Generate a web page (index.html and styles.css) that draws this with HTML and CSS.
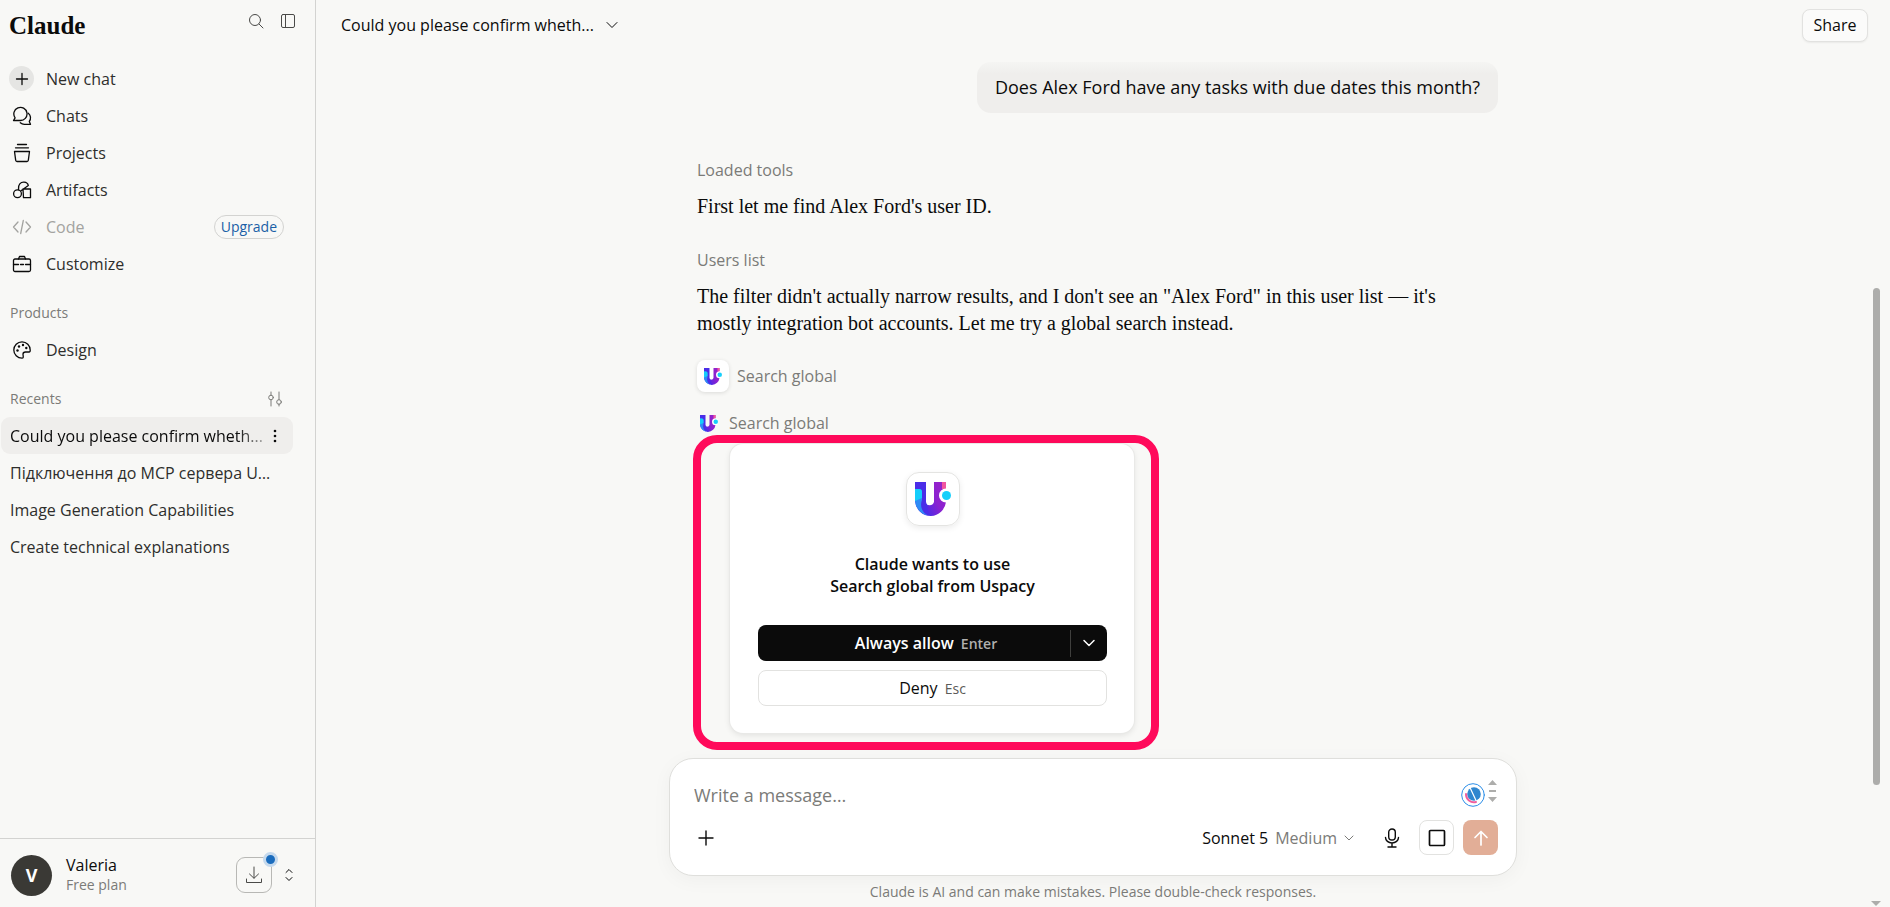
FILE: index.html
```html
<!DOCTYPE html>
<html lang="en">
<head>
    <meta charset="UTF-8">
    <meta name="viewport" content="width=device-width, initial-scale=1.0">
    <title>Claude</title>
    <link rel="stylesheet" href="styles.css">
</head>
<body>
    <!-- Shared logo -->
    <svg width="0" height="0" class="defs" aria-hidden="true">
        <defs>
            <linearGradient id="u-right" x1="0" y1="1" x2="1" y2="0">
                <stop offset="0" stop-color="#4a2be8"/>
                <stop offset="0.45" stop-color="#8a22d0"/>
                <stop offset="1" stop-color="#9a22c8"/>
            </linearGradient>
            <symbol id="uspacy" viewBox="0 0 36 34">
                <path d="M0 0h11v20a5 5 0 0 0 5 4v10A16 16 0 0 1 0 19z" fill="#4a2de8"/>
                <path d="M0 7h4a3 3 0 0 1 3 3v8a12 12 0 0 0 6 15.500A16 16 0 0 1 0 19z" fill="#2e8cf5"/>
                <path d="M0 7h4a3 3 0 0 1 3 3v6l-7 3z" fill="#14cdfb"/>
                <path d="M19 0h12v20A16 16 0 0 1 16 34a12 12 0 0 1 -3 -11a5 5 0 0 0 6 -3z" fill="url(#u-right)"/>
                <path d="M27 0h4v7h-4z" fill="#f0559f"/>
                <circle cx="31" cy="13.500" r="7" fill="#fff"/>
                <circle cx="31.500" cy="13.500" r="4.500" fill="#17cffb"/>
            </symbol>
        </defs>
    </svg>

    <div class="app">
        <!-- Sidebar -->
        <aside class="sidebar">
            <div class="sidebar-top">
                <a href="#" class="brand">Claude</a>
                <div class="top-actions">
                    <button class="icon-btn" aria-label="Search">
                        <svg width="16" height="16" viewBox="0 0 16 16"><circle cx="7" cy="7" r="5.500"/><path d="M11 11l4 4"/></svg>
                    </button>
                    <button class="icon-btn" aria-label="Toggle sidebar">
                        <svg width="16" height="16" viewBox="0 0 16 16"><rect x="1.500" y="1.500" width="13" height="13" rx="1.500"/><path d="M5.500 1.500v13"/></svg>
                    </button>
                </div>
            </div>

            <nav class="menu">
                <a href="#" class="menu-item">
                    <span class="menu-icon plus"><svg width="14" height="14" viewBox="0 0 14 14"><path d="M7 1.500v11M1.500 7h11"/></svg></span>
                    New chat
                </a>
                <a href="#" class="menu-item">
                    <span class="menu-icon"><svg width="20" height="20" viewBox="0 0 20 20"><path d="M1.500 14.500l1.600-2.700A6.600 6.600 0 1 1 8 14.500z"/><path d="M16.300 7.200a6 6 0 0 1 1 8.300l1.200 2.800h-5.500a6 6 0 0 1-4.700-1.600"/></svg></span>
                    Chats
                </a>
                <a href="#" class="menu-item">
                    <span class="menu-icon"><svg width="20" height="20" viewBox="0 0 20 20"><path d="M5.500 1.500h9M3.500 4.800h13M2.500 8.500h15l-1.200 8.800a1.300 1.300 0 0 1-1.300 1.200h-10a1.300 1.300 0 0 1-1.300-1.200z"/></svg></span>
                    Projects
                </a>
                <a href="#" class="menu-item">
                    <span class="menu-icon"><svg width="20" height="20" viewBox="0 0 20 20"><circle cx="5.500" cy="13.800" r="3.900"/><path d="M11 9h7.500v8.700h-7zM6.500 9.500C5.800 4.500 8.800 2 12 2.200c2.500.2 4 1.600 4.300 3.300L9 10.700"/></svg></span>
                    Artifacts
                </a>
                <a href="#" class="menu-item disabled">
                    <span class="menu-icon"><svg width="20" height="20" viewBox="0 0 20 20"><path d="M6 5l-4.500 5L6 15M14 5l4.500 5-4.500 5M11.300 3.500l-2.600 13"/></svg></span>
                    Code
                    <span class="badge">Upgrade</span>
                </a>
                <a href="#" class="menu-item">
                    <span class="menu-icon"><svg width="20" height="20" viewBox="0 0 20 20"><rect x="1.500" y="5" width="17" height="12.500" rx="1.500"/><path d="M6.500 5l1-2.500h5l1 2.500M1.500 10.500h5M8.500 10.500h3M13.500 10.500h5"/></svg></span>
                    Customize
                </a>
            </nav>

            <h2 class="section-title">Products</h2>
            <nav class="menu">
                <a href="#" class="menu-item">
                    <span class="menu-icon"><svg width="20" height="20" viewBox="0 0 20 20"><path d="M10 1.800a8.200 8.200 0 0 0 0 16.400c2 0 1-2.600 1-4s1-2.200 2.500-2.200H17c1 0 1.300-1 1.200-2A8.200 8.200 0 0 0 10 1.800z"/><g class="dots"><circle cx="5.500" cy="10.500" r="1.200"/><circle cx="7" cy="6.500" r="1.200"/><circle cx="11" cy="5" r="1.200"/><circle cx="14.300" cy="8" r="1.200"/></g></svg></span>
                    Design
                </a>
            </nav>

            <div class="section-row">
                <h2 class="section-title">Recents</h2>
                <button class="icon-btn" aria-label="Filter recents">
                    <svg width="16" height="16" viewBox="0 0 16 16"><path d="M4 1v3.500M4 9v6M12 1v7.500M12 13v2"/><circle cx="4" cy="6.500" r="2.300"/><circle cx="12" cy="11" r="2.300"/></svg>
                </button>
            </div>
            <ul class="recents">
                <li class="active">
                    <a href="#" class="fade">Could you please confirm wheth...</a>
                    <button class="icon-btn more" aria-label="More options">
                        <svg width="4" height="14" viewBox="0 0 4 14"><circle cx="2" cy="2" r="1.300"/><circle cx="2" cy="7" r="1.300"/><circle cx="2" cy="12" r="1.300"/></svg>
                    </button>
                </li>
                <li><a href="#">Підключення до MCP сервера U…</a></li>
                <li><a href="#">Image Generation Capabilities</a></li>
                <li><a href="#">Create technical explanations</a></li>
            </ul>

            <div class="account">
                <span class="avatar">V</span>
                <div class="account-text">
                    <span class="account-name">Valeria</span>
                    <span class="account-plan">Free plan</span>
                </div>
                <button class="download" aria-label="Download app">
                    <svg width="18" height="18" viewBox="0 0 18 18"><path d="M9 1v11M4.500 8L9 12.300 13.500 8M1.500 13v3.500h15V13"/></svg>
                    <span class="dot"></span>
                </button>
                <button class="icon-btn" aria-label="Account menu">
                    <svg width="10" height="14" viewBox="0 0 10 14"><path d="M2 4.500l3-3 3 3M2 9.500l3 3 3-3"/></svg>
                </button>
            </div>
        </aside>

        <!-- Chat -->
        <main class="main">
            <header class="header">
                <button class="chat-title">
                    Could you please confirm wheth...
                    <svg width="14" height="14" viewBox="0 0 14 14"><path d="M2 4.500l5 5 5-5"/></svg>
                </button>
                <button class="share">Share</button>
            </header>

            <div class="thread">
                <div class="bubble">Does Alex Ford have any tasks with due dates this month?</div>

                <div class="reply">
                    <p class="tool">Loaded tools</p>
                    <p class="answer">First let me find Alex Ford's user ID.</p>
                    <p class="tool">Users list</p>
                    <p class="answer">The filter didn't actually narrow results, and I don't see an "Alex Ford" in this user list — it's mostly integration bot accounts. Let me try a global search instead.</p>

                    <div class="tool-call">
                        <span class="tool-logo boxed"><svg width="18" height="17"><use href="#uspacy"/></svg></span>
                        Search global
                    </div>
                    <div class="tool-call pending">
                        <span class="tool-logo"><svg width="18" height="17"><use href="#uspacy"/></svg></span>
                        Search global
                    </div>
                </div>

                <div class="highlight">
                    <div class="card">
                        <span class="card-logo"><svg width="36" height="34"><use href="#uspacy"/></svg></span>
                        <h3 class="card-title">Claude wants to use<br>Search global from Uspacy</h3>
                        <div class="allow">
                            <button class="allow-main">Always allow <kbd>Enter</kbd></button>
                            <button class="allow-more" aria-label="More choices">
                                <svg width="14" height="14" viewBox="0 0 14 14"><path d="M2 4.500l5 5 5-5"/></svg>
                            </button>
                        </div>
                        <button class="deny">Deny <kbd>Esc</kbd></button>
                    </div>
                </div>
            </div>

            <form class="composer">
                <div class="composer-row">
                    <textarea rows="1" placeholder="Write a message…" aria-label="Write a message"></textarea>
                    <svg class="helper" width="24" height="24" viewBox="0 0 24 24">
                        <circle cx="12" cy="12" r="11.300" fill="#fff" stroke="#2b8ee8"/>
                        <circle cx="13" cy="11" r="6.800" fill="#2f86cf" stroke="none"/>
                        <path d="M5 11a8 8 0 0 0 10 8" stroke="#ee5f9f" stroke-width="2"/>
                        <path d="M8.500 3.500l6.500 14" stroke="#fff" stroke-width="1.200"/>
                    </svg>
                    <svg class="grip" width="9" height="22" viewBox="0 0 9 22"><path d="M0 5l4.500-5L9 5zM1 10h7v2H1zM0 17l4.500 5L9 17z"/></svg>
                </div>
                <div class="composer-row tools">
                    <button type="button" class="icon-btn add" aria-label="Add">
                        <svg width="16" height="16" viewBox="0 0 16 16"><path d="M8 1v14M1 8h14"/></svg>
                    </button>
                    <button type="button" class="model">
                        Sonnet 5 <span>Medium</span>
                        <svg width="10" height="10" viewBox="0 0 10 10"><path d="M1 3l4 4 4-4"/></svg>
                    </button>
                    <button type="button" class="icon-btn mic" aria-label="Voice">
                        <svg width="16" height="20" viewBox="0 0 16 20"><rect x="4.700" y="1" width="6.600" height="11" rx="3.300"/><path d="M1.500 9.500a6.500 5.500 0 0 0 13 0M8 15v4M4 19h8"/></svg>
                    </button>
                    <button type="button" class="square stop" aria-label="Stop">
                        <svg width="18" height="18" viewBox="0 0 18 18"><rect x="1.500" y="1.500" width="15" height="15" rx="1"/></svg>
                    </button>
                    <button type="submit" class="square send" aria-label="Send">
                        <svg width="16" height="16" viewBox="0 0 16 16"><path d="M8 15V2M2 7.500L8 1.500l6 6"/></svg>
                    </button>
                </div>
            </form>
            <p class="note">Claude is AI and can make mistakes. Please double-check responses.</p>
        </main>

        <!-- Scroll track -->
        <div class="scroll">
            <span class="scroll-thumb"></span>
            <span class="scroll-arrow"></span>
        </div>
    </div>
</body>
</html>
```

FILE: styles.css
```css
* {
    box-sizing: border-box;
}

body {
    margin: 0;
    background: #f8f8f6;
    color: #0b0b0b;
    font-family: "Open Sans", "Noto Sans", sans-serif;
    font-size: 16px;
    line-height: 22px;
}

button {
    font: inherit;
    color: inherit;
    background: none;
    border: none;
    padding: 0;
    cursor: pointer;
}

a {
    color: inherit;
    text-decoration: none;
}

h2, h3, p, ul {
    margin: 0;
    padding: 0;
}

kbd {
    margin-left: 3px;
    font: inherit;
    font-size: 14px;
}

svg {
    display: block;
    flex: none;
    fill: none;
    stroke: currentColor;
    stroke-linecap: round;
    stroke-linejoin: round;
}

.defs {
    position: absolute;
}

.tool-logo svg,
.card-logo svg {
    stroke: none;
}

.app {
    display: flex;
    height: 100vh;
    overflow: hidden;
}

/* Sidebar */
.sidebar {
    display: flex;
    flex-direction: column;
    width: 316px;
    flex: none;
    border-right: 1px solid #d3d3d1;
    background: #f8f8f6;
}

.sidebar-top {
    display: flex;
    justify-content: space-between;
    height: 60px;
    padding: 8px 17px 0 9px;
}

.brand {
    font-family: "Liberation Serif", serif;
    font-size: 25px;
    font-weight: bold;
    line-height: 36px;
}

.top-actions {
    display: flex;
    gap: 12px;
    height: 26px;
    color: #4a4a48;
}

.icon-btn {
    display: flex;
    align-items: center;
    justify-content: center;
    min-width: 20px;
}

.menu-item {
    display: flex;
    align-items: center;
    gap: 12px;
    height: 37px;
    padding: 0 31px 0 9px;
    color: #2e2e2c;
}

.menu-icon {
    display: flex;
    align-items: center;
    justify-content: center;
    width: 25px;
    height: 25px;
    color: #0b0b0b;
}

.menu-icon svg {
    stroke-width: 1.3px;
}

.menu-icon.plus {
    border-radius: 50%;
    background: #e5e5e3;
}

.dots {
    fill: currentColor;
    stroke: none;
}

.disabled,
.disabled .menu-icon {
    color: #a3a3a0;
}

.badge {
    margin-left: auto;
    padding: 0 6px;
    border: 1px solid #d3d3d1;
    border-radius: 12px;
    color: #1b5fa6;
    font-size: 14px;
}

.section-title {
    padding: 20px 0 7px 10px;
    color: #7b7b78;
    font-size: 14px;
    font-weight: normal;
}

.section-row {
    display: flex;
    align-items: flex-end;
    justify-content: space-between;
    padding-right: 30px;
    color: #7b7b78;
}

.section-row .icon-btn {
    height: 36px;
}

.recents {
    list-style: none;
}

.recents li {
    display: flex;
    align-items: center;
    height: 37px;
    margin: 0 22px 0 1px;
    padding: 0 16px 0 9px;
    border-radius: 9px;
    color: #2e2e2c;
}

.recents a {
    flex: 1;
    overflow: hidden;
    white-space: nowrap;
}

.recents .active {
    background: #efeeec;
    color: #0b0b0b;
}

.fade {
    -webkit-mask-image: linear-gradient(to right, #000 86%, rgba(0, 0, 0, 0.3) 97%);
    mask-image: linear-gradient(to right, #000 86%, rgba(0, 0, 0, 0.3) 97%);
}

.more {
    min-width: 4px;
}

.more svg {
    fill: currentColor;
    stroke: none;
}

.account {
    display: flex;
    align-items: center;
    height: 69px;
    margin-top: auto;
    padding: 4px 16px 0 11px;
    border-top: 1px solid #d3d3d1;
}

.avatar {
    display: flex;
    align-items: center;
    justify-content: center;
    width: 41px;
    height: 41px;
    border-radius: 50%;
    background: #3a3935;
    color: #fff;
    font-size: 18px;
    font-weight: bold;
}

.account-text {
    display: flex;
    flex: 1;
    flex-direction: column;
    margin-left: 14px;
    line-height: 19px;
}

.account-name {
    font-weight: 500;
}

.account-plan {
    color: #7b7b78;
    font-size: 14px;
}

.download {
    position: relative;
    display: flex;
    align-items: center;
    justify-content: center;
    width: 36px;
    height: 36px;
    margin-right: 7px;
    border: 1px solid #b8b8b5;
    border-radius: 9px;
    color: #4a4a48;
}

.dot {
    position: absolute;
    top: -6px;
    right: -7px;
    width: 15px;
    height: 15px;
    border: 3px solid #c5d9ed;
    border-radius: 50%;
    background: #1a6cbd;
}

/* Chat */
.main {
    display: flex;
    flex: 1;
    flex-direction: column;
    min-width: 0;
}

.header {
    display: flex;
    align-items: center;
    justify-content: space-between;
    height: 50px;
    flex: none;
    padding: 0 2px 0 25px;
}

.chat-title {
    display: flex;
    align-items: center;
    gap: 11px;
    font-weight: 500;
}

.share {
    width: 66px;
    height: 33px;
    border: 1px solid #e2e2e0;
    border-radius: 8px;
    background: #fbfbfa;
    box-shadow: 0 1px 2px rgba(0, 0, 0, 0.06);
    font-weight: 500;
}

.thread {
    flex: 1;
    width: 100%;
    max-width: 848px;
    min-height: 0;
    margin: 0 auto;
    padding: 12px 19px 0 28px;
}

.bubble {
    width: fit-content;
    margin-left: auto;
    padding: 14px 18px 15px;
    border-radius: 14px;
    background: linear-gradient(to bottom, #f5f5f3, #efeeec 12px);
    font-size: 18px;
    line-height: 22px;
}

.reply {
    padding-top: 46px;
}

.tool {
    margin-bottom: 12px;
    color: #7b7b78;
}

.answer {
    max-width: 770px;
    margin-bottom: 29px;
    font-family: "Liberation Serif", serif;
    font-size: 20px;
    line-height: 27px;
}

.answer + .tool-call {
    margin-top: -6px;
}

.tool-call {
    display: flex;
    align-items: center;
    gap: 8px;
    height: 32px;
    color: #7b7b78;
}

.tool-call.pending {
    height: 22px;
    margin-top: 20px;
}

.tool-logo {
    display: flex;
    align-items: center;
    justify-content: center;
    width: 24px;
}

.boxed {
    width: 32px;
    height: 32px;
    border-radius: 8px;
    background: #fff;
    box-shadow: 0 1px 4px rgba(0, 0, 0, 0.12);
}

.highlight {
    width: 466px;
    max-width: 100%;
    margin: 1px 0 0 -4px;
    padding: 1px 17px 9px 29px;
    border: 8px solid #ff0a5b;
    border-radius: 24px;
}

.card {
    display: flex;
    flex-direction: column;
    align-items: center;
    padding: 28px 27px 27px 28px;
    border-radius: 13px;
    background: #fff;
    box-shadow: 0 0 0 1px #e9e9e7, 0 2px 6px rgba(0, 0, 0, 0.1);
}

.card-logo {
    display: flex;
    align-items: center;
    justify-content: center;
    width: 54px;
    height: 54px;
    border: 1px solid #e4e4e2;
    border-radius: 13px;
    box-shadow: 0 2px 6px rgba(0, 0, 0, 0.08);
}

.card-title {
    margin: 27px 0 28px;
    font-size: 16px;
    font-weight: 600;
    line-height: 22px;
    text-align: center;
}

.allow {
    display: flex;
    align-items: center;
    align-self: stretch;
    height: 36px;
    border-radius: 8px;
    background: #0b0b0b;
    color: #fff;
}

.allow-main {
    flex: 1;
    height: 100%;
    padding-left: 24px;
    font-weight: 600;
}

.allow-main kbd {
    color: #b0b0ae;
}

.allow-more {
    display: flex;
    align-items: center;
    justify-content: center;
    width: 37px;
    height: 27px;
    border-left: 1px solid #3f3f3d;
}

.allow-more svg {
    stroke-width: 1.5px;
}

.deny {
    align-self: stretch;
    height: 36px;
    margin-top: 9px;
    border: 1px solid #e2e2e0;
    border-radius: 8px;
    font-weight: 500;
}

.deny kbd {
    color: #5b5b58;
}

.composer {
    width: 100%;
    max-width: 848px;
    height: 118px;
    flex: none;
    margin: 0 auto;
    padding: 21px 18px 17px 24px;
    border: 1px solid #dfdfdc;
    border-radius: 24px;
    background: #fff;
    box-shadow: 0 4px 20px rgba(0, 0, 0, 0.04);
}

.composer-row {
    display: flex;
    align-items: center;
}

.composer textarea {
    flex: 1;
    height: 30px;
    padding: 0;
    border: none;
    outline: none;
    resize: none;
    overflow: hidden;
    background: none;
    font: inherit;
    font-size: 18px;
    line-height: 30px;
}

.composer textarea::placeholder {
    color: #7b7b78;
}

.grip {
    margin-left: 3px;
    margin-right: 1px;
    margin-bottom: 8px;
    fill: #adadab;
    stroke: none;
}

.tools {
    margin-top: 10px;
}

.add {
    width: 24px;
    margin-right: auto;
}

.model {
    display: flex;
    align-items: center;
    gap: 7px;
    font-weight: 500;
}

.model span,
.model svg {
    color: #7b7b78;
    font-weight: 400;
}

.mic {
    margin: 0 17px 0 28px;
}

.mic svg,
.add svg {
    stroke-width: 1.4px;
}

.square {
    display: flex;
    align-items: center;
    justify-content: center;
    width: 35px;
    height: 35px;
    border-radius: 8px;
}

.stop {
    margin-right: 9px;
    border: 1px solid #e2e2e0;
}

.stop svg,
.send svg {
    stroke-width: 1.7px;
}

.send {
    background: #e2ae97;
    color: #fff;
}

.note {
    padding: 5px 0 4px;
    color: #7b7b78;
    font-size: 14px;
    text-align: center;
}

/* Scroll track */
.scroll {
    display: flex;
    flex-direction: column;
    align-items: center;
    width: 20px;
    flex: none;
    padding-right: 8px;
}

.scroll::before {
    content: "";
    flex: 288;
}

.scroll-thumb {
    flex: 497;
    width: 7px;
    border-radius: 4px;
    background: #adadab;
}

.scroll-arrow {
    display: flex;
    flex: 122;
    align-items: flex-end;
}

.scroll-arrow::after {
    content: "";
    margin-bottom: 1px;
    border: 5px solid transparent;
    border-top-color: #adadab;
    border-bottom: none;
}
```
